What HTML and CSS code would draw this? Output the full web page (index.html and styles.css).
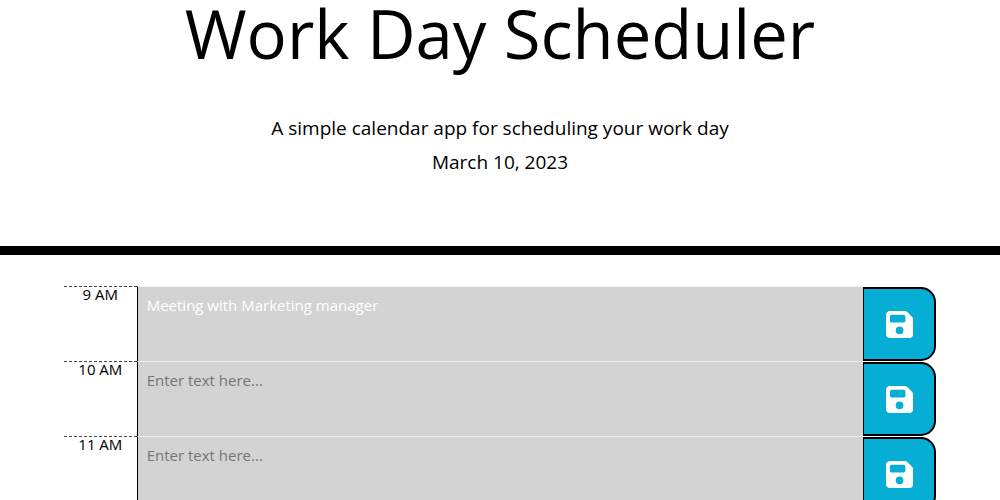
FILE: index.html
```
<!DOCTYPE html>
<html lang="en">
<head>
<meta charset="utf-8">
<title>Work Day Scheduler</title>
<link rel="stylesheet" href="styles.css">
</head>
<body>
<header class="header">
<h1 class="title">Work Day Scheduler</h1>
<p class="lead">A simple calendar app for scheduling your work day</p>
<p class="lead">March 10, 2023</p>
</header>
<main class="container">
<section class="time-block">
<label class="hour" for="hour-9">9 AM</label>
<textarea class="description" id="hour-9" placeholder="Enter text here...">Meeting with Marketing manager</textarea>
<button class="save" type="button" aria-label="Save 9 AM"><svg class="icon" viewBox="0 0 448 512" aria-hidden="true"><path d="M64 32C28.700 32 0 60.700 0 96V416c0 35.300 28.700 64 64 64H384c35.300 0 64-28.700 64-64V173.300c0-17-6.700-33.300-18.700-45.300L352 50.700C340 38.700 323.700 32 306.700 32H64zm0 96c0-17.700 14.300-32 32-32H288c17.700 0 32 14.300 32 32v64c0 17.700-14.300 32-32 32H96c-17.700 0-32-14.300-32-32V128zM224 288a64 64 0 1 1 0 128 64 64 0 1 1 0-128z"/></svg></button>
</section>
<section class="time-block">
<label class="hour" for="hour-10">10 AM</label>
<textarea class="description" id="hour-10" placeholder="Enter text here..."></textarea>
<button class="save" type="button" aria-label="Save 10 AM"><svg class="icon" viewBox="0 0 448 512" aria-hidden="true"><path d="M64 32C28.700 32 0 60.700 0 96V416c0 35.300 28.700 64 64 64H384c35.300 0 64-28.700 64-64V173.300c0-17-6.700-33.300-18.700-45.300L352 50.700C340 38.700 323.700 32 306.700 32H64zm0 96c0-17.700 14.300-32 32-32H288c17.700 0 32 14.300 32 32v64c0 17.700-14.300 32-32 32H96c-17.700 0-32-14.300-32-32V128zM224 288a64 64 0 1 1 0 128 64 64 0 1 1 0-128z"/></svg></button>
</section>
<section class="time-block">
<label class="hour" for="hour-11">11 AM</label>
<textarea class="description" id="hour-11" placeholder="Enter text here..."></textarea>
<button class="save" type="button" aria-label="Save 11 AM"><svg class="icon" viewBox="0 0 448 512" aria-hidden="true"><path d="M64 32C28.700 32 0 60.700 0 96V416c0 35.300 28.700 64 64 64H384c35.300 0 64-28.700 64-64V173.300c0-17-6.700-33.300-18.700-45.300L352 50.700C340 38.700 323.700 32 306.700 32H64zm0 96c0-17.700 14.300-32 32-32H288c17.700 0 32 14.300 32 32v64c0 17.700-14.300 32-32 32H96c-17.700 0-32-14.300-32-32V128zM224 288a64 64 0 1 1 0 128 64 64 0 1 1 0-128z"/></svg></button>
</section>
</main>
</body>
</html>
```

FILE: styles.css
```
* {
  box-sizing: border-box;
}

html {
  overflow: hidden;
}

body {
  margin: 0;
  background: #fff;
  color: #000;
  font-family: "Open Sans", sans-serif;
  font-size: 15px;
  line-height: 14px;
}

.header {
  padding-bottom: 67px;
  border-bottom: 9px solid #000;
  text-align: center;
}

.title {
  margin: 0 0 45px;
  font-size: 67px;
  font-weight: 400;
  line-height: 66px;
}

.lead {
  margin: 0;
  font-size: 19px;
  line-height: 34px;
}

.container {
  padding: 31px 64px 0;
}

.time-block {
  display: grid;
  grid-template-columns: 1fr 10fr 1fr;
  height: 75px;
}

.hour {
  border-top: 1px dashed #444;
  text-align: center;
}

.description {
  padding: 9px;
  border: 0;
  border-left: 1px solid #000;
  border-top: 1px solid #f0f0f0;
  background: #d3d3d3;
  color: #fff;
  font: inherit;
  line-height: 18px;
  resize: none;
}

.description::placeholder {
  color: #757575;
}

.save {
  margin-top: 1px;
  padding: 0;
  border: 2px solid #000;
  border-left-width: 1px;
  border-radius: 0 15px 15px 0;
  background: #06aed5;
  color: #fff;
}

.icon {
  display: block;
  height: 31px;
  margin: 0 auto;
  fill: currentColor;
}
```
